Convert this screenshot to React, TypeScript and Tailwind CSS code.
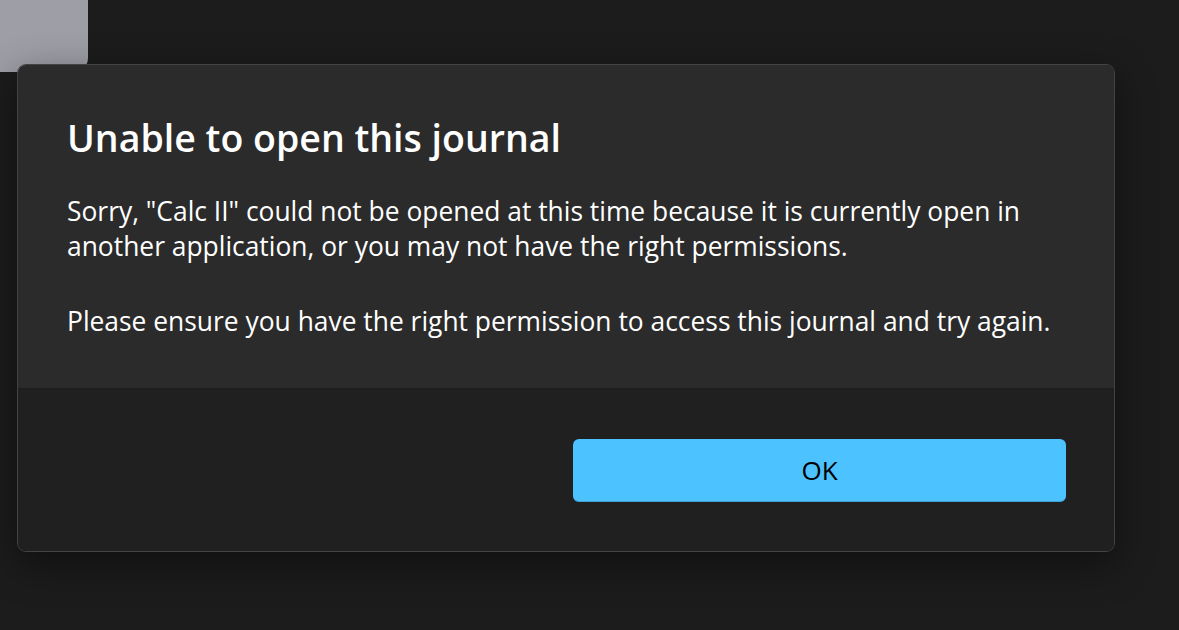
export default function App() {
  return (
    <div
      className="relative h-[630px] w-[1179px] overflow-hidden bg-[#1c1c1c]"
      style={{ fontFamily: '"Open Sans", "Noto Sans", sans-serif' }}
    >
      {/* window behind the dialog */}
      <div className="absolute left-0 top-0 h-[72px] w-[88px] rounded-br-[14px] bg-[#9e9ea6]" />

      <div className="absolute left-[17px] top-[64px] w-[1098px] overflow-hidden rounded-[9px] border border-[#434343] shadow-[0_12px_40px_rgba(0,0,0,0.45)]">
        <div className="bg-[#2b2b2b] px-[49px] pb-[49px] pt-[49px] text-white">
          <h1 className="text-[37.5px] font-semibold leading-[48px]">Unable to open this journal</h1>
          <div className="mt-[32px] text-[26.4px] leading-[35px]">
            <p>
              Sorry, "Calc II" could not be opened at this time because it is currently open in
              <br />
              another application, or you may not have the right permissions.
            </p>
            <p className="mt-[40px]">
              Please ensure you have the right permission to access this journal and try again.
            </p>
          </div>
        </div>
        <div className="grid grid-cols-2 gap-[14px] border-t border-[#1d1d1d] bg-[#202020] px-[48px] pb-[49px] pt-[50px]">
          <div />
          <button className="h-[63px] rounded-[6px] border-b border-[#3fa2d6] bg-[#4cc2ff] text-[26px] text-black">
            OK
          </button>
        </div>
      </div>
    </div>
  );
}
